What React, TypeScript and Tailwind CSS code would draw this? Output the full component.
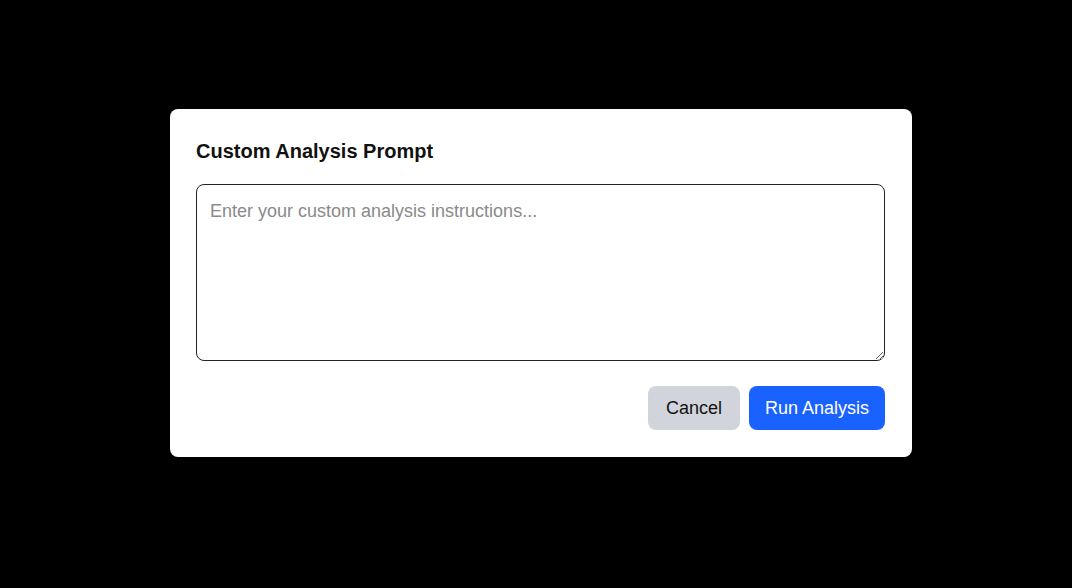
export default function App() {
  return (
    <div
      className="w-full h-[588px] bg-black flex items-start justify-center pt-[109px] pl-[10px]"
      style={{ fontFamily: '"Liberation Sans", Arial, sans-serif' }}
    >
      <div className="w-[742px] bg-white rounded-lg pt-[28px] px-[26px] pb-[27px] pr-[27px]">
        <h2 className="text-xl leading-7 font-bold text-[#111] mb-[19px]">Custom Analysis Prompt</h2>
        <textarea
          className="block w-full h-[177px] border border-[#222] rounded-lg px-[13px] py-3 text-lg leading-7 text-black placeholder:text-[#8a8a8a] outline-none"
          placeholder="Enter your custom analysis instructions..."
        />
        <div className="flex justify-end gap-[9px] mt-[25px]">
          <button className="h-[44px] px-[18px] rounded-lg bg-[#d1d5db] text-lg text-[#111]">Cancel</button>
          <button className="h-[44px] px-4 rounded-lg bg-[#1a62ff] text-lg text-white">Run Analysis</button>
        </div>
      </div>
    </div>
  );
}
